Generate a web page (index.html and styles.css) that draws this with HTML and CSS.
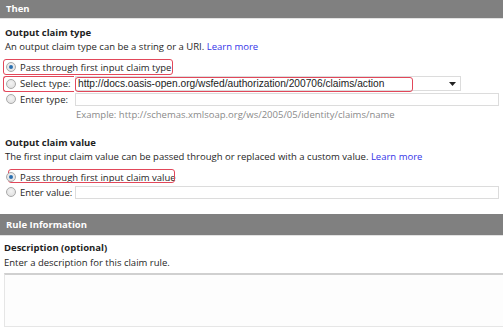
FILE: index.html
```html
<!DOCTYPE html>
<html>
<head>
<meta charset="utf-8">
<link rel="stylesheet" href="styles.css">
</head>
<body>
<div class="page">
  <div class="bar bar-then">Then</div>
  <div class="section s1">
    <div class="title">Output claim type</div>
    <div class="desc">An output claim type can be a string or a URI. <a class="link">Learn more</a></div>
    <div class="row r-pass">
      <span class="mark mark-pass"></span>
      <span class="radio on"></span><span class="lbl">Pass through first input claim type</span>
    </div>
    <div class="row r-select">
      <span class="mark mark-sel"></span>
      <span class="radio"></span><span class="lbl fixed">Select type:</span>
      <div class="select">
        <span class="mark mark-url"></span>
        <span class="seltext">http://docs.oasis-open.org/wsfed/authorization/200706/claims/action</span>
        <svg class="arrow" width="7" height="4" viewBox="0 0 7 4"><path d="M0 0H7L3.5 4Z" fill="#222"/></svg>
      </div>
    </div>
    <div class="row r-enter">
      <span class="radio"></span><span class="lbl fixed">Enter type:</span>
      <div class="input"></div>
    </div>
    <div class="example">Example: http://schemas.xmlsoap.org/ws/2005/05/identity/claims/name</div>
  </div>
  <div class="section s2">
    <div class="title">Output claim value</div>
    <div class="desc">The first input claim value can be passed through or replaced with a custom value. <a class="link">Learn more</a></div>
    <div class="row r-pass2">
      <span class="mark mark-pass2"></span>
      <span class="radio on"></span><span class="lbl">Pass through first input claim value</span>
    </div>
    <div class="row r-enter2">
      <span class="radio"></span><span class="lbl fixed">Enter value:</span>
      <div class="input"></div>
    </div>
  </div>
  <div class="bar bar-rule">Rule Information</div>
  <div class="section s3">
    <div class="title">Description (optional)</div>
    <div class="desc">Enter a description for this claim rule.</div>
    <div class="textarea"></div>
  </div>
</div>
</body>
</html>
```

FILE: styles.css
```css
html, body {
  margin: 0;
  padding: 0;
  background: #ffffff;
}
.page {
  width: 503px;
  height: 332px;
  overflow: hidden;
  font-family: "Open Sans", "Noto Sans", sans-serif;
  font-size: 9.5px;
  color: #262626;
}
.bar {
  background: #808080;
  color: #ffffff;
  font-weight: 700;
  padding-left: 6px;
  border-bottom: 1px solid #e2e2e2;
}
.bar-then {
  height: 18px;
  line-height: 18px;
}
.bar-rule {
  height: 21px;
  line-height: 21px;
  margin-top: 15px;
}
.section {
  padding-left: 5px;
}
.s1 { padding-top: 7px; }
.s2 { padding-top: 14px; }
.s3 { padding-top: 5px; padding-left: 4px; }
.title {
  font-weight: 700;
  height: 14px;
  line-height: 14px;
  color: #1e1e1e;
}
.desc {
  height: 14px;
  line-height: 14px;
}
.s3 .desc { margin-top: 1px; }
.link {
  color: #3535e8;
}
.row {
  position: relative;
  display: flex;
  align-items: center;
}
.r-pass { margin-top: 5px; height: 16px; }
.r-select { height: 17px; }
.r-enter { height: 14px; }
.r-pass2 { margin-top: 5px; height: 16px; }
.r-enter2 { height: 14px; }
.radio {
  width: 10px;
  height: 10px;
  box-sizing: border-box;
  border-radius: 50%;
  border: 1px solid #a9a9a9;
  background: radial-gradient(circle at 50% 40%, #f4f4f4 0%, #dcdcdc 100%);
  margin-left: 1px;
  margin-right: 4px;
  flex: none;
  position: relative;
}
.radio.on::after {
  content: "";
  position: absolute;
  left: 2px;
  top: 2px;
  width: 4px;
  height: 4px;
  border-radius: 50%;
  background: #2a6fb0;
}
.lbl {
  white-space: nowrap;
}
.fixed {
  width: 55px;
  flex: none;
}
.select {
  position: relative;
  width: 386px;
  height: 15px;
  box-sizing: border-box;
  border: 1px solid #dcdcdc;
  background: #fff;
  display: flex;
  align-items: center;
  padding-left: 2px;
}
.seltext {
  font-family: "Liberation Sans", Arial, sans-serif;
  font-size: 10.2px;
  color: #222;
  white-space: nowrap;
}
.arrow {
  position: absolute;
  right: 4px;
  top: 5px;
}
.input {
  width: 424px;
  height: 13px;
  box-sizing: border-box;
  border: 1px solid #dcdcdc;
  background: #fff;
}
.example {
  margin-left: 71px;
  margin-top: 2px;
  height: 14px;
  line-height: 14px;
  color: #8a8a8a;
}
.mark {
  position: absolute;
  border: 1px solid #e2475a;
  border-radius: 3px;
  pointer-events: none;
}
.mark-pass {
  left: -2px;
  top: 0;
  width: 168px;
  height: 14px;
}
.mark-sel {
  left: -2px;
  top: 1px;
  width: 70px;
  height: 14px;
  border-right: none;
  border-radius: 3px 0 0 3px;
}
.mark-url {
  left: -1px;
  top: 0;
  width: 336px;
  height: 13px;
}
.mark-pass2 {
  left: 3px;
  top: 0;
  width: 165px;
  height: 12px;
}
.textarea {
  margin-top: 3px;
  height: 54px;
  box-sizing: border-box;
  border-top: 2px solid #d0d0d0;
  border-left: 1px solid #e6e6e6;
  border-bottom: 1px solid #e6e6e6;
  background: #fdfdfd;
}
```
